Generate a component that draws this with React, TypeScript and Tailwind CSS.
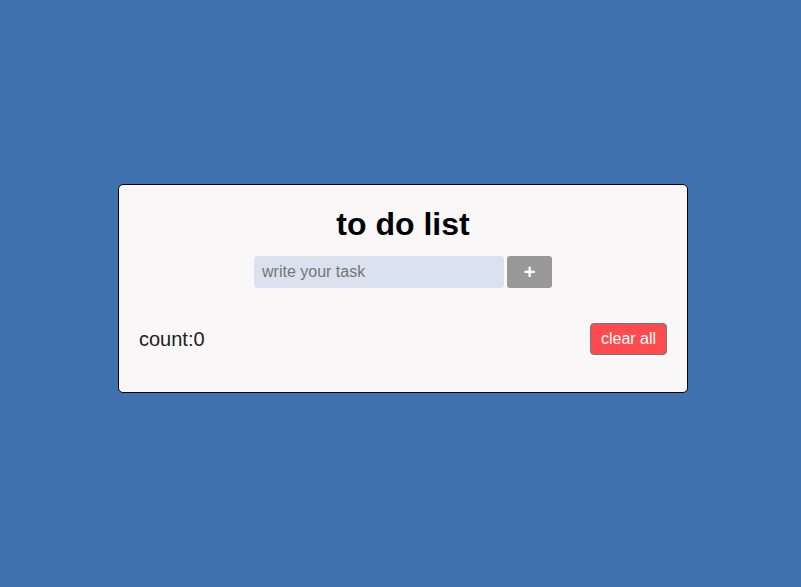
import React, { useState } from 'react';

const App = () => {
    const [task, setTask] = useState('');
    const [tasks, setTasks] = useState<string[]>([]);

    const addTask = () => {
        if (task.trim() === '') return;
        setTasks([...tasks, task.trim()]);
        setTask('');
    };

    return (
        <div className="flex h-[587px] w-full items-center justify-center bg-[#3f72af] pb-[11px] pl-[5px] font-['Liberation_Sans',Arial,sans-serif]">
            <div className="w-[570px] rounded-[5px] border border-black bg-[#f9f7f8] px-[20px] pb-[37px] pt-[21px]">
                <h1 className="text-center text-[32px] font-bold leading-[37px] text-black">to do list</h1>

                <div className="mt-[13px] flex justify-center gap-[3px]">
                    <input
                        value={task}
                        onChange={(e) => setTask(e.target.value)}
                        placeholder="write your task"
                        className="h-[32px] w-[250px] rounded-[4px] bg-[#dbe2ef] px-[8px] text-[16px] text-black outline-none placeholder:text-[#757575]"
                    />
                    <button
                        onClick={addTask}
                        className="h-[32px] w-[45px] rounded-[3px] bg-[#999999] text-[20px] font-bold leading-none text-white"
                    >
                        +
                    </button>
                </div>

                {tasks.map((t, i) => (
                    <div key={i} className="mt-2 text-[16px]">{t}</div>
                ))}

                <div className="mt-[35px] flex items-center justify-between">
                    <span className="text-[20px] leading-[24px] text-[#222]">count:{tasks.length}</span>
                    <button
                        onClick={() => setTasks([])}
                        className="h-[32px] w-[77px] rounded-[4px] border border-[#777] bg-[#fd4b4f] text-[16px] text-white"
                    >
                        clear all
                    </button>
                </div>
            </div>
        </div>
    );
};

export default App;
